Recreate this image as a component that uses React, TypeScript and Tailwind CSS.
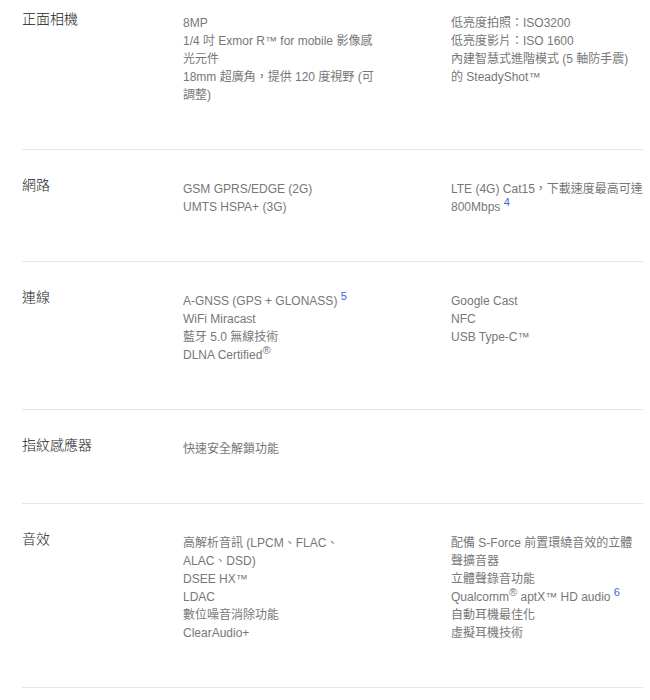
import React from "react";

type Line = React.ReactNode;

const Sup = ({ children, blue }: { children: React.ReactNode; blue?: boolean }) => (
  <sup className={blue ? "text-[11px] text-[#3d66d4]" : "text-[11px] text-[#777]"}>{children}</sup>
);

const rows: { label: string; col1: Line[]; col2: Line[]; first?: boolean }[] = [
  {
    label: "正面相機",
    first: true,
    col1: [
      "8MP",
      "1/4 吋 Exmor R™ for mobile 影像感",
      "光元件",
      "18mm 超廣角，提供 120 度視野 (可",
      "調整)",
    ],
    col2: ["低亮度拍照：ISO3200", "低亮度影片：ISO 1600", "內建智慧式進階模式 (5 軸防手震)", "的 SteadyShot™"],
  },
  {
    label: "網路",
    col1: ["GSM GPRS/EDGE (2G)", "UMTS HSPA+ (3G)"],
    col2: [
      "LTE (4G) Cat15，下載速度最高可達",
      <>
        800Mbps <Sup blue>4</Sup>
      </>,
    ],
  },
  {
    label: "連線",
    col1: [
      <>
        A-GNSS (GPS + GLONASS) <Sup blue>5</Sup>
      </>,
      "WiFi Miracast",
      "藍牙 5.0 無線技術",
      <>
        DLNA Certified<Sup>®</Sup>
      </>,
    ],
    col2: ["Google Cast", "NFC", "USB Type-C™"],
  },
  {
    label: "指紋感應器",
    col1: ["快速安全解鎖功能"],
    col2: [],
  },
  {
    label: "音效",
    col1: ["高解析音訊 (LPCM、FLAC、", "ALAC、DSD)", "DSEE HX™", "LDAC", "數位噪音消除功能", "ClearAudio+"],
    col2: [
      "配備 S-Force 前置環繞音效的立體",
      "聲擴音器",
      "立體聲錄音功能",
      <>
        Qualcomm<Sup>®</Sup> aptX™ HD audio <Sup blue>6</Sup>
      </>,
      "自動耳機最佳化",
      "虛擬耳機技術",
    ],
  },
];

export default function App() {
  return (
    <div
      className="w-[650px] h-[700px] overflow-hidden bg-white pl-[22px] pr-[7px]"
      style={{ fontFamily: '"Liberation Sans", Arial, "Noto Sans CJK TC", sans-serif' }}
    >
      {rows.map((r, i) => (
        <div
          key={i}
          className={
            (r.first ? "pt-[9px] " : "pt-[25px] ") +
            "flex border-b border-[#e6e6e6] pb-[45px]"
          }
        >
          <div className="w-[161px] shrink-0 text-[14px] leading-[20px] font-light text-[#222]">{r.label}</div>
          <div className="w-[268px] shrink-0 mt-[5px] text-[12px] leading-[18px] text-[#777]">
            {r.col1.map((l, j) => (
              <div key={j} className="whitespace-nowrap">
                {l}
              </div>
            ))}
          </div>
          <div className="flex-1 min-w-0 mt-[5px] text-[12px] leading-[18px] text-[#777]">
            {r.col2.map((l, j) => (
              <div key={j} className="whitespace-nowrap">
                {l}
              </div>
            ))}
          </div>
        </div>
      ))}
    </div>
  );
}
